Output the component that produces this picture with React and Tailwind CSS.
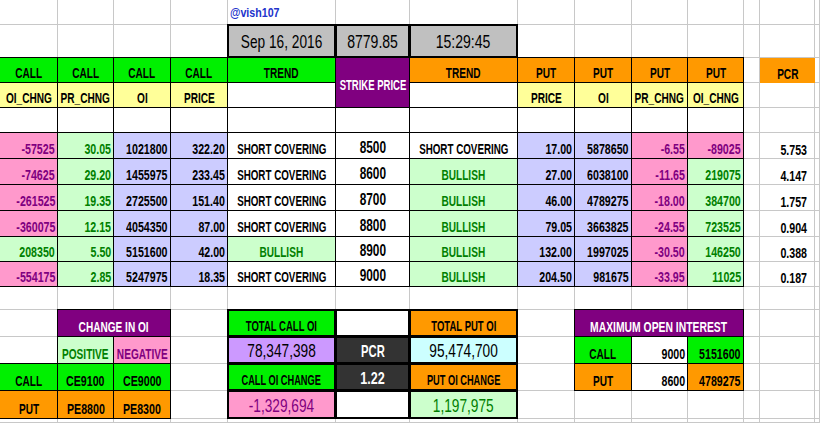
import React from 'react';

const COLS = 14;
const ROWS = 17;

const rows = [
  ['-57525', '30.05', '1021800', '322.20', 'SC', '8500', 'SC', '17.00', '5878650', '-6.55', '-89025', '5.753'],
  ['-74625', '29.20', '1455975', '233.45', 'SC', '8600', 'B', '27.00', '6038100', '-11.65', '219075', '4.147'],
  ['-261525', '19.35', '2725500', '151.40', 'SC', '8700', 'B', '46.00', '4789275', '-18.00', '384700', '1.757'],
  ['-360075', '12.15', '4054350', '87.00', 'SC', '8800', 'B', '79.05', '3663825', '-24.55', '723525', '0.904'],
  ['208350', '5.50', '5151600', '42.00', 'B', '8900', 'B', '132.00', '1997025', '-30.50', '146250', '0.388'],
  ['-554175', '2.85', '5247975', '18.35', 'SC', '9000', 'B', '204.50', '981675', '-33.95', '11025', '0.187'],
];

// colour styles
const green = 'bg-[#00f000] text-black';
const orange = 'bg-[#ff9900] text-black';
const yellow = 'bg-[#ffff99] text-black';
const purple = 'bg-[#800080] text-white';
const pos = 'bg-[#ccffcc] text-[#008000]';
const neg = 'bg-[#ff99cc] text-[#800080]';
const lav = 'bg-[#ccccff] text-black';

// excel uses calibri and the shot is squeezed sideways; liberation sans squeezed gets close
function Cell({ c, r, cs = 1, rs = 1, b = 'thin', right = false, mid = false, sx = 'scale-x-[0.72]', className = '', children }) {
  const border =
    b === 'thin' ? '-ml-px -mt-px border border-black' : b === 'thick' ? '-ml-px -mt-px border-2 border-black' : '';
  return (
    <div
      style={{ gridColumn: `${c + 1} / span ${cs}`, gridRow: `${r + 1} / span ${rs}` }}
      className={`flex overflow-hidden whitespace-nowrap ${mid ? 'items-center' : 'items-end pb-[2px]'} ${right ? 'justify-end pr-0.5' : 'justify-center'} ${border} ${className}`}
    >
      {children != null && (
        <span className={`inline-block leading-none ${sx} ${right ? 'origin-right' : 'origin-center'}`}>{children}</span>
      )}
    </div>
  );
}

export default function App() {
  const grid = [];
  for (let r = 0; r < ROWS; r++) {
    for (let c = 0; c < COLS; c++) {
      grid.push(
        <div
          key={`g${r}-${c}`}
          style={{ gridColumn: c + 1, gridRow: r + 1 }}
          className="border-r border-b border-[#c8c8c8]"
        />
      );
    }
  }

  return (
    <div className="w-[820px] h-[423px] overflow-hidden bg-white font-['Liberation_Sans',Arial,sans-serif] font-bold text-[14px] text-black">
      <div className="grid w-full h-full grid-cols-[58px_56px_57px_57px_108px_74px_108px_57px_57px_56px_56px_16px_55px_1fr] grid-rows-[25px_33px_25px_25px_25px_26px_26px_26px_26px_25px_25px_23px_27px_27px_27px_28px_1fr]">
        {grid}

        {/* handle + date row */}
        <div className="col-start-5 row-start-1 flex items-center pl-0.5 whitespace-nowrap text-[13px] text-[#2233cc]">
          <span className="inline-block leading-none scale-x-[0.82] origin-left">@vish107</span>
        </div>
        <Cell c={4} r={1} b="thick" mid className="pt-0.5 bg-[#c0c0c0] font-normal text-[18px]" sx="scale-x-[0.76]">Sep 16, 2016</Cell>
        <Cell c={5} r={1} b="thick" mid className="pt-0.5 bg-[#c0c0c0] font-normal text-[18px]" sx="scale-x-[0.78]">8779.85</Cell>
        <Cell c={6} r={1} b="thick" mid className="pt-0.5 bg-[#c0c0c0] font-normal text-[18px]" sx="scale-x-[0.78]">15:29:45</Cell>

        {/* headers */}
        {[0, 1, 2, 3].map((c) => (
          <Cell key={`hc${c}`} c={c} r={2} className={green}>CALL</Cell>
        ))}
        <Cell c={4} r={2} className={green}>TREND</Cell>
        <Cell c={5} r={2} rs={2} mid className={`pt-1 ${purple}`} sx="scale-x-[0.68]">STRIKE PRICE</Cell>
        <Cell c={6} r={2} className={orange}>TREND</Cell>
        {[7, 8, 9, 10].map((c) => (
          <Cell key={`hp${c}`} c={c} r={2} className={orange}>PUT</Cell>
        ))}
        <Cell c={12} r={2} b="none" className={orange}>PCR</Cell>

        {['OI_CHNG', 'PR_CHNG', 'OI', 'PRICE'].map((t, i) => (
          <Cell key={`sc${i}`} c={i} r={3} className={yellow}>{t}</Cell>
        ))}
        <Cell c={4} r={3} className="bg-white" />
        <Cell c={6} r={3} className="bg-white" />
        {['PRICE', 'OI', 'PR_CHNG', 'OI_CHNG'].map((t, i) => (
          <Cell key={`sp${i}`} c={i + 7} r={3} className={yellow}>{t}</Cell>
        ))}
        {[0, 1, 2, 3, 4, 5, 6, 7, 8, 9, 10].map((c) => (
          <Cell key={`e${c}`} c={c} r={4} className="bg-white" />
        ))}

        {/* option chain rows */}
        {rows.map((d, i) => {
          const r = i + 5;
          const trend = (t, c) =>
            t === 'B' ? (
              <Cell c={c} r={r} className={pos}>BULLISH</Cell>
            ) : (
              <Cell c={c} r={r} className="bg-white" sx="scale-x-[0.7]">SHORT COVERING</Cell>
            );
          const n = 'scale-x-[0.76]';
          return (
            <React.Fragment key={d[5]}>
              <Cell c={0} r={r} right sx={n} className={d[0].startsWith('-') ? neg : pos}>{d[0]}</Cell>
              <Cell c={1} r={r} right sx={n} className={pos}>{d[1]}</Cell>
              <Cell c={2} r={r} right sx={n} className={lav}>{d[2]}</Cell>
              <Cell c={3} r={r} right sx={n} className={lav}>{d[3]}</Cell>
              {trend(d[4], 4)}
              <Cell c={5} r={r} className="bg-white text-[16px]" sx="scale-x-[0.74]">{d[5]}</Cell>
              {trend(d[6], 6)}
              <Cell c={7} r={r} right sx={n} className={lav}>{d[7]}</Cell>
              <Cell c={8} r={r} right sx={n} className={lav}>{d[8]}</Cell>
              <Cell c={9} r={r} right sx={n} className={neg}>{d[9]}</Cell>
              <Cell c={10} r={r} right sx={n} className={d[10].startsWith('-') ? neg : pos}>{d[10]}</Cell>
              <Cell c={12} r={r} b="none" right sx={n} className="!pr-2">{d[11]}</Cell>
            </React.Fragment>
          );
        })}

        {/* change in OI */}
        <Cell c={1} r={12} cs={2} className={purple}>CHANGE IN OI</Cell>
        <Cell c={1} r={13} className={pos}>POSITIVE</Cell>
        <Cell c={2} r={13} className={neg}>NEGATIVE</Cell>
        <Cell c={0} r={14} className={green}>CALL</Cell>
        <Cell c={1} r={14} className={green} sx="scale-x-[0.76]">CE9100</Cell>
        <Cell c={2} r={14} className={green} sx="scale-x-[0.76]">CE9000</Cell>
        <Cell c={0} r={15} className={orange}>PUT</Cell>
        <Cell c={1} r={15} className={orange} sx="scale-x-[0.76]">PE8800</Cell>
        <Cell c={2} r={15} className={orange} sx="scale-x-[0.76]">PE8300</Cell>

        {/* totals */}
        <Cell c={4} r={12} b="thick" className={green} sx="scale-x-[0.68]">TOTAL CALL OI</Cell>
        <Cell c={4} r={13} b="thick" className="bg-[#cc99ff] font-normal text-[19px]" sx="scale-x-[0.72]">78,347,398</Cell>
        <Cell c={4} r={14} b="thick" className={green} sx="scale-x-[0.66]">CALL OI CHANGE</Cell>
        <Cell c={4} r={15} b="thick" className={`font-normal text-[19px] ${neg}`} sx="scale-x-[0.72]">-1,329,694</Cell>
        <Cell c={5} r={12} b="thick" className="bg-white" />
        <Cell c={5} r={13} b="thick" className="bg-[#333333] text-white text-[17px]" sx="scale-x-[0.66]">PCR</Cell>
        <Cell c={5} r={14} b="thick" className="bg-[#333333] text-white text-[17px]" sx="scale-x-[0.74]">1.22</Cell>
        <Cell c={5} r={15} b="thick" className="bg-white" />
        <Cell c={6} r={12} b="thick" className={orange} sx="scale-x-[0.68]">TOTAL PUT OI</Cell>
        <Cell c={6} r={13} b="thick" className="bg-[#ccffff] font-normal text-[19px]" sx="scale-x-[0.72]">95,474,700</Cell>
        <Cell c={6} r={14} b="thick" className={orange} sx="scale-x-[0.66]">PUT OI CHANGE</Cell>
        <Cell c={6} r={15} b="thick" className={`font-normal text-[19px] ${pos}`} sx="scale-x-[0.72]">1,197,975</Cell>

        {/* max open interest */}
        <Cell c={8} r={12} cs={3} className={purple} sx="scale-x-[0.74]">MAXIMUM OPEN INTEREST</Cell>
        <Cell c={8} r={13} className={green}>CALL</Cell>
        <Cell c={9} r={13} right className="bg-white" sx="scale-x-[0.76]">9000</Cell>
        <Cell c={10} r={13} right className={green} sx="scale-x-[0.76]">5151600</Cell>
        <Cell c={8} r={14} className={orange}>PUT</Cell>
        <Cell c={9} r={14} right className="bg-white" sx="scale-x-[0.76]">8600</Cell>
        <Cell c={10} r={14} right className={orange} sx="scale-x-[0.76]">4789275</Cell>
      </div>
    </div>
  );
}
